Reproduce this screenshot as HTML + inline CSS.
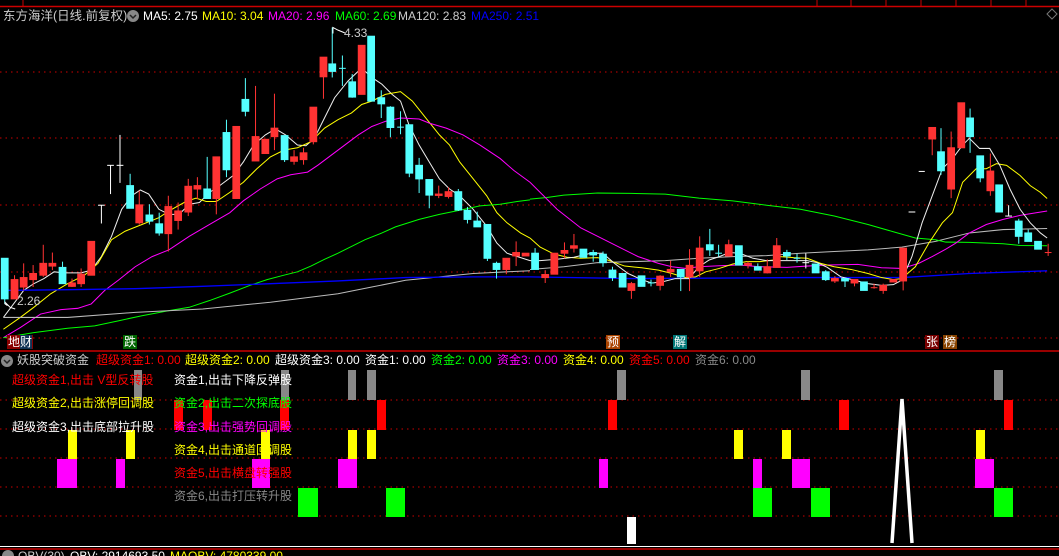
<!DOCTYPE html>
<html><head><meta charset="utf-8"><style>
html,body{margin:0;background:#000;width:1059px;height:556px;overflow:hidden}
body{position:relative;font-family:"Liberation Sans","Noto Sans CJK SC",sans-serif;font-size:12px}
.t{position:absolute;white-space:nowrap;line-height:14px}
.lb{position:absolute;top:335px;height:14px;line-height:14px;font-size:12px;color:#fff;padding:0 1px;white-space:nowrap}
</style></head><body>
<svg width="1059" height="556" style="position:absolute;left:0;top:0">
<line x1="0" y1="6.5" x2="1059" y2="6.5" stroke="#c00" stroke-width="1.5"/>
<line x1="23" y1="0" x2="23" y2="6" stroke="#c00"/>
<g stroke="#c00"><line x1="817" y1="0" x2="817" y2="6"/><line x1="851" y1="0" x2="851" y2="6"/><line x1="886" y1="0" x2="886" y2="6"/><line x1="921" y1="0" x2="921" y2="6"/><line x1="956" y1="0" x2="956" y2="6"/><line x1="991" y1="0" x2="991" y2="6"/><line x1="1026" y1="0" x2="1026" y2="6"/></g>
<g stroke="#c00" stroke-dasharray="1.5,4" stroke-width="1">
<line x1="0" y1="72" x2="1059" y2="72"/><line x1="0" y1="138" x2="1059" y2="138"/><line x1="0" y1="205" x2="1059" y2="205"/><line x1="0" y1="272" x2="1059" y2="272"/><line x1="0" y1="338" x2="1059" y2="338"/>
<line x1="0" y1="400" x2="1059" y2="400"/><line x1="0" y1="429" x2="1059" y2="429"/><line x1="0" y1="458" x2="1059" y2="458"/><line x1="0" y1="487" x2="1059" y2="487"/><line x1="0" y1="516" x2="1059" y2="516"/>
</g>
<line x1="0" y1="351" x2="1059" y2="351" stroke="#c00" stroke-width="1.5"/>
<g transform="translate(0,20) scale(0.338)">
<g fill="none" stroke-width="3">
<polyline stroke="#eee" points="10,880 40,840 70,800 100,780 130,765 160,745 190,748 240,748 270,740 300,700 330,640 360,560 390,520 415,503 440,515 470,560 500,575 530,575 560,545 590,540 620,510 650,490 690,460 720,420 750,370 785,340 815,322 845,340 880,370 905,372 930,350 960,290 990,230 1030,180 1070,142 1100,170 1130,190 1160,220 1185,240 1210,310 1240,370 1270,420 1300,470 1330,500 1360,520 1400,560 1440,610 1470,660 1500,690 1568,712"/>
<polyline stroke="#ff0" points="10,915 60,880 100,850 150,810 200,780 250,755 290,720 330,650 370,625 420,605 470,585 500,565 550,537 580,527 610,537 640,537 680,510 720,480 760,440 800,405 840,385 880,378 920,360 960,320 1000,295 1040,275 1070,250 1100,240 1140,220 1185,212 1220,240 1260,290 1300,340 1330,370 1360,420 1400,470 1440,520 1470,570 1500,600 1540,630 1568,645"/>
<polyline stroke="#f0f" points="10,940 60,910 120,870 180,857 230,853 270,840 310,800 350,770 400,730 450,700 500,680 560,640 620,605 680,570 720,535 770,500 820,470 860,458 910,450 940,430 980,400 1020,370 1060,340 1100,315 1140,300 1185,290 1240,293 1270,305 1320,320 1370,340 1420,370 1480,410 1520,445 1568,480"/>
<polyline stroke="#0f0" points="10,940 100,925 200,912 280,905 350,890 420,875 500,860 560,850 620,830 680,808 740,785 790,768 840,755 880,745 920,728 960,708 1000,690 1040,670 1080,650 1130,630 1170,612 1240,590 1300,575 1360,563 1420,550 1480,545 1530,537 1568,532"/>
<polyline stroke="#bbb" points="10,880 200,880 400,865 600,855 800,835 1000,810 1100,790 1200,770 1300,760 1400,750 1500,745 1568,742"/>
<polyline stroke="#00f" stroke-width="4" points="10,800 200,798 400,795 600,788 800,780 1000,772 1200,762 1400,760 1568,760"/>
</g>
<g stroke-width="3">
<g stroke="#f33" fill="#f33">
<line x1="43" y1="755" x2="43" y2="825"/><rect x="33" y="768" width="20" height="57"/>
<line x1="70" y1="720" x2="70" y2="800"/><rect x="60" y="762" width="20" height="28"/>
<line x1="98" y1="725" x2="98" y2="790"/><rect x="88" y="750" width="20" height="18"/>
<line x1="128" y1="665" x2="128" y2="760"/><rect x="118" y="720" width="20" height="35"/>
<line x1="155" y1="688" x2="155" y2="740"/><rect x="145" y="720" width="20" height="8"/>
<line x1="213" y1="765" x2="213" y2="790"/><rect x="203" y="778" width="20" height="10"/>
<line x1="240" y1="735" x2="240" y2="790"/><rect x="230" y="752" width="20" height="28"/>
<rect x="260" y="655" width="20" height="100"/>
<line x1="412" y1="505" x2="412" y2="605"/><rect x="402" y="547" width="20" height="53"/>
<line x1="498" y1="520" x2="498" y2="685"/><rect x="488" y="552" width="20" height="80"/>
<line x1="527" y1="540" x2="527" y2="620"/><rect x="517" y="565" width="20" height="28"/>
<line x1="557" y1="470" x2="557" y2="580"/><rect x="547" y="492" width="20" height="76"/>
<line x1="584" y1="465" x2="584" y2="530"/><rect x="574" y="490" width="20" height="10"/>
<line x1="640" y1="405" x2="640" y2="575"/><rect x="630" y="405" width="20" height="123"/>
<rect x="689" y="315" width="20" height="213"/>
<line x1="756" y1="195" x2="756" y2="417"/><rect x="746" y="345" width="20" height="72"/>
<rect x="775" y="353" width="20" height="42"/>
<line x1="812" y1="218" x2="812" y2="385"/><rect x="802" y="320" width="20" height="25"/>
<line x1="870" y1="385" x2="870" y2="428"/><rect x="860" y="405" width="20" height="13"/>
<line x1="898" y1="378" x2="898" y2="428"/><rect x="888" y="393" width="20" height="20"/>
<line x1="927" y1="258" x2="927" y2="368"/><rect x="917" y="258" width="20" height="102"/>
<line x1="957" y1="110" x2="957" y2="233"/><rect x="947" y="110" width="20" height="58"/>
<rect x="1060" y="75" width="20" height="145"/>
<line x1="1298" y1="490" x2="1298" y2="527"/><rect x="1288" y="515" width="20" height="4"/>
<line x1="1327" y1="495" x2="1327" y2="528"/><rect x="1317" y="508" width="20" height="14"/>
<line x1="1498" y1="705" x2="1498" y2="752"/><rect x="1488" y="705" width="20" height="33"/>
<line x1="1527" y1="655" x2="1527" y2="728"/><rect x="1517" y="688" width="20" height="10"/>
<rect x="1545" y="690" width="20" height="8"/>
</g>
<g stroke="#5ff" fill="#5ff">
<line x1="14" y1="705" x2="14" y2="840"/><rect x="4" y="705" width="20" height="120"/>
<line x1="185" y1="715" x2="185" y2="780"/><rect x="175" y="732" width="20" height="48"/>
<line x1="385" y1="455" x2="385" y2="557"/><rect x="375" y="490" width="20" height="67"/>
<line x1="442" y1="545" x2="442" y2="605"/><rect x="432" y="577" width="20" height="18"/>
<line x1="471" y1="570" x2="471" y2="638"/><rect x="461" y="603" width="20" height="27"/>
<line x1="613" y1="405" x2="613" y2="528"/><rect x="603" y="500" width="20" height="28"/>
<line x1="670" y1="295" x2="670" y2="465"/><rect x="660" y="333" width="20" height="110"/>
<line x1="726" y1="172" x2="726" y2="285"/><rect x="716" y="235" width="20" height="35"/>
<line x1="842" y1="342" x2="842" y2="420"/><rect x="832" y="342" width="20" height="71"/>
<line x1="983" y1="22" x2="983" y2="170"/><rect x="973" y="130" width="20" height="22"/>
<line x1="1013" y1="105" x2="1013" y2="195"/><line x1="1003" y1="143" x2="1023" y2="143"/>
<line x1="1042" y1="160" x2="1042" y2="230"/><rect x="1032" y="183" width="20" height="45"/>
<rect x="1088" y="48" width="20" height="192"/>
<line x1="1128" y1="208" x2="1128" y2="290"/><rect x="1118" y="230" width="20" height="18"/>
<line x1="1155" y1="255" x2="1155" y2="347"/><rect x="1145" y="258" width="20" height="60"/>
<line x1="1185" y1="270" x2="1185" y2="338"/><line x1="1175" y1="317" x2="1195" y2="317"/>
<line x1="1211" y1="310" x2="1211" y2="465"/><rect x="1201" y="310" width="20" height="143"/>
<line x1="1240" y1="408" x2="1240" y2="512"/><rect x="1230" y="430" width="20" height="40"/>
<line x1="1270" y1="472" x2="1270" y2="557"/><rect x="1260" y="472" width="20" height="46"/>
<line x1="1356" y1="500" x2="1356" y2="565"/><rect x="1346" y="508" width="20" height="54"/>
<line x1="1383" y1="553" x2="1383" y2="602"/><rect x="1373" y="563" width="20" height="27"/>
<line x1="1412" y1="567" x2="1412" y2="612"/><rect x="1402" y="595" width="20" height="17"/>
<line x1="1442" y1="605" x2="1442" y2="713"/><rect x="1432" y="605" width="20" height="100"/>
<line x1="1469" y1="715" x2="1469" y2="765"/><rect x="1459" y="720" width="20" height="18"/>
</g>
<g stroke="#fff"><line x1="300" y1="548" x2="300" y2="602"/><line x1="290" y1="548" x2="310" y2="548"/>
<line x1="327" y1="430" x2="327" y2="515"/><line x1="317" y1="430" x2="337" y2="430"/>
<line x1="355" y1="340" x2="355" y2="482"/><line x1="345" y1="430" x2="365" y2="430"/>
<polyline fill="none" points="985,40 985,22 1000,30 1020,38"/><polyline fill="none" points="22,845 15,840 15,835 30,850 45,855"/></g>
</g>
</g>
<g transform="translate(530,20) scale(0.338)">
<g fill="none" stroke-width="3">
<polyline stroke="#bbb" points="0,738 100,730 200,718 300,715 400,712 500,705 600,700 700,697 800,690 900,685 1000,680 1100,672 1200,655 1300,630 1400,620 1530,617"/>
<polyline stroke="#0f0" points="0,530 50,525 100,518 200,512 300,513 400,515 500,527 600,535 700,548 800,560 900,580 1000,605 1080,628 1140,645 1200,650 1230,657 1300,658 1400,662 1450,667 1530,668"/>
<polyline stroke="#f0f" points="0,480 50,530 80,560 150,615 220,650 270,675 320,700 380,720 420,730 460,735 500,730 560,727 620,725 680,730 760,732 820,728 880,725 970,723 1040,733 1100,735 1150,720 1190,700 1230,678 1260,660 1300,630 1350,605 1400,590 1450,578 1500,570 1530,565"/>
<polyline stroke="#00f" stroke-width="4" points="0,760 300,765 800,762 1100,762 1300,750 1530,742"/>
<polyline stroke="#ff0" points="0,645 30,672 70,692 110,702 150,705 200,703 230,710 280,728 330,733 380,740 420,750 460,762 490,760 520,745 560,735 600,722 640,715 680,715 720,710 740,700 780,703 820,705 860,720 900,730 950,738 1000,750 1040,762 1075,768 1100,765 1140,730 1180,660 1220,600 1250,570 1280,480 1320,440 1350,440 1380,425 1410,430 1450,460 1480,490 1510,510 1530,528"/>
<polyline stroke="#eee" points="0,712 30,712 80,708 130,702 180,690 215,690 250,720 290,750 330,768 360,778 390,775 430,765 470,765 500,730 530,710 560,700 590,688 620,690 660,705 700,712 740,712 780,712 820,712 850,718 880,732 920,760 960,770 1000,780 1040,785 1075,783 1100,770 1130,700 1160,600 1190,520 1220,440 1250,410 1280,370 1300,350 1330,380 1360,380 1390,430 1420,500 1450,560 1480,600 1510,630 1530,645"/>
</g>
<g stroke-width="3">
<g stroke="#f33" fill="#f33">
<line x1="45" y1="740" x2="45" y2="778"/><rect x="35" y="753" width="20" height="9"/>
<rect x="62" y="690" width="20" height="62"/>
<line x1="102" y1="658" x2="102" y2="705"/><rect x="92" y="682" width="20" height="8"/>
<line x1="130" y1="633" x2="130" y2="688"/><rect x="120" y="668" width="20" height="7"/>
<line x1="300" y1="775" x2="300" y2="825"/><rect x="290" y="780" width="20" height="20"/>
<line x1="385" y1="755" x2="385" y2="800"/><rect x="375" y="758" width="20" height="27"/>
<line x1="416" y1="712" x2="416" y2="760"/><rect x="406" y="738" width="20" height="7"/>
<line x1="472" y1="678" x2="472" y2="802"/><rect x="462" y="726" width="20" height="34"/>
<line x1="502" y1="640" x2="502" y2="760"/><rect x="492" y="675" width="20" height="67"/>
<line x1="588" y1="650" x2="588" y2="700"/><rect x="578" y="665" width="20" height="33"/>
<line x1="645" y1="715" x2="645" y2="735"/><rect x="635" y="720" width="20" height="5"/>
<line x1="702" y1="708" x2="702" y2="750"/><rect x="692" y="730" width="20" height="18"/>
<line x1="730" y1="645" x2="730" y2="732"/><rect x="720" y="668" width="20" height="64"/>
<line x1="902" y1="758" x2="902" y2="778"/><rect x="892" y="765" width="20" height="7"/>
<line x1="960" y1="768" x2="960" y2="788"/><rect x="950" y="768" width="20" height="10"/>
<line x1="1018" y1="780" x2="1018" y2="795"/><line x1="1008" y1="792" x2="1028" y2="792"/>
<line x1="1045" y1="780" x2="1045" y2="810"/><rect x="1035" y="785" width="20" height="15"/>
<rect x="1065" y="768" width="20" height="7"/>
<line x1="1104" y1="675" x2="1104" y2="800"/><rect x="1094" y="675" width="20" height="97"/>
<line x1="1190" y1="318" x2="1190" y2="400"/><rect x="1180" y="318" width="20" height="34"/>
<line x1="1246" y1="330" x2="1246" y2="527"/><rect x="1236" y="378" width="20" height="122"/>
<rect x="1266" y="245" width="20" height="133"/>
<line x1="1362" y1="395" x2="1362" y2="520"/><rect x="1352" y="447" width="20" height="58"/>
<line x1="1533" y1="662" x2="1533" y2="698"/><line x1="1523" y1="688" x2="1543" y2="688"/>
</g>
<g stroke="#5ff" fill="#5ff">
<line x1="15" y1="675" x2="15" y2="738"/><rect x="5" y="690" width="20" height="48"/>
<rect x="148" y="678" width="20" height="24"/>
<line x1="187" y1="680" x2="187" y2="715"/><rect x="177" y="688" width="20" height="7"/>
<line x1="216" y1="685" x2="216" y2="730"/><rect x="206" y="693" width="20" height="25"/>
<line x1="244" y1="730" x2="244" y2="772"/><rect x="234" y="740" width="20" height="22"/>
<rect x="264" y="750" width="20" height="40"/>
<rect x="320" y="757" width="20" height="31"/>
<line x1="358" y1="768" x2="358" y2="788"/><line x1="348" y1="778" x2="368" y2="778"/>
<line x1="446" y1="738" x2="446" y2="802"/><rect x="436" y="738" width="20" height="22"/>
<line x1="532" y1="618" x2="532" y2="698"/><rect x="522" y="665" width="20" height="15"/>
<line x1="558" y1="665" x2="558" y2="700"/><line x1="548" y1="690" x2="568" y2="690"/>
<rect x="608" y="668" width="20" height="57"/>
<line x1="674" y1="720" x2="674" y2="740"/><rect x="664" y="730" width="20" height="10"/>
<line x1="760" y1="680" x2="760" y2="710"/><rect x="750" y="688" width="20" height="10"/>
<line x1="790" y1="692" x2="790" y2="718"/><line x1="780" y1="705" x2="800" y2="705"/>
<rect x="835" y="722" width="20" height="26"/>
<line x1="875" y1="740" x2="875" y2="772"/><rect x="865" y="745" width="20" height="23"/>
<line x1="932" y1="765" x2="932" y2="790"/><rect x="922" y="765" width="20" height="7"/>
<rect x="978" y="775" width="20" height="25"/>
<line x1="1216" y1="320" x2="1216" y2="458"/><rect x="1206" y="390" width="20" height="56"/>
<line x1="1302" y1="262" x2="1302" y2="393"/><rect x="1292" y="290" width="20" height="55"/>
<line x1="1332" y1="402" x2="1332" y2="480"/><rect x="1322" y="402" width="20" height="65"/>
<rect x="1378" y="488" width="20" height="80"/>
<line x1="1446" y1="588" x2="1446" y2="662"/><rect x="1436" y="595" width="20" height="45"/>
<line x1="1474" y1="620" x2="1474" y2="655"/><rect x="1464" y="630" width="20" height="25"/>
<rect x="1493" y="655" width="20" height="23"/>
</g>
<g stroke="#fff">
<line x1="816" y1="690" x2="816" y2="735"/><line x1="806" y1="718" x2="826" y2="718"/>
<line x1="1120" y1="568" x2="1140" y2="568"/><line x1="1150" y1="448" x2="1168" y2="448"/>
<line x1="1416" y1="548" x2="1416" y2="580"/><line x1="1406" y1="580" x2="1426" y2="580"/>
</g>
</g>
</g>
<g>
<g fill="#888"><rect x="134" y="370" width="8" height="30"/><rect x="281" y="370" width="8" height="30"/><rect x="348" y="370" width="8" height="30"/><rect x="367" y="370" width="9" height="30"/><rect x="617" y="370" width="9" height="30"/><rect x="801" y="370" width="9" height="30"/><rect x="994" y="370" width="9" height="30"/></g>
<g fill="#f00"><rect x="174" y="400" width="9" height="30"/><rect x="203" y="400" width="9" height="30"/><rect x="280" y="400" width="9" height="30"/><rect x="377" y="400" width="9" height="30"/><rect x="608" y="400" width="9" height="30"/><rect x="839" y="400" width="10" height="30"/><rect x="1004" y="400" width="9" height="30"/></g>
<g fill="#ff0"><rect x="68" y="430" width="9" height="29"/><rect x="126" y="430" width="9" height="29"/><rect x="261" y="430" width="9" height="29"/><rect x="348" y="430" width="9" height="29"/><rect x="367" y="430" width="9" height="29"/><rect x="734" y="430" width="9" height="29"/><rect x="782" y="430" width="9" height="29"/><rect x="976" y="430" width="9" height="29"/></g>
<g fill="#f0f"><rect x="57" y="459" width="20" height="29"/><rect x="116" y="459" width="9" height="29"/><rect x="252" y="459" width="18" height="29"/><rect x="338" y="459" width="19" height="29"/><rect x="599" y="459" width="9" height="29"/><rect x="753" y="459" width="9" height="29"/><rect x="792" y="459" width="18" height="29"/><rect x="975" y="459" width="19" height="29"/></g>
<g fill="#0f0"><rect x="298" y="488" width="20" height="29"/><rect x="386" y="488" width="19" height="29"/><rect x="753" y="488" width="19" height="29"/><rect x="811" y="488" width="19" height="29"/><rect x="994" y="488" width="19" height="29"/></g>
<rect x="627" y="517" width="9" height="27" fill="#fff"/>
<polyline points="892,543 902,399 912,543" fill="none" stroke="#fff" stroke-width="3.5"/>
<line x1="0" y1="546.5" x2="1059" y2="546.5" stroke="#fff" stroke-width="1"/>
<line x1="0" y1="549" x2="1059" y2="549" stroke="#c00" stroke-width="1.5"/>
</g>
<circle cx="133" cy="16" r="6" fill="#888"/><path d="M130 15 l3 3 l3 -3" stroke="#222" stroke-width="1.5" fill="none"/>
<circle cx="7" cy="361" r="6" fill="#888"/><path d="M4 360 l3 3 l3 -3" stroke="#222" stroke-width="1.5" fill="none"/>
<circle cx="8" cy="556" r="6" fill="#888"/>
<path d="M1047 14 l5 -5 l5 5 l-5 5z" fill="none" stroke="#777"/>
</svg>
<div class="t" style="left:3px;top:9px;color:#ccc;font-size:12.5px">东方海洋(日线.前复权)</div>
<div class="t" style="left:143px;top:9px;color:#fff">MA5: 2.75</div>
<div class="t" style="left:202px;top:9px;color:#ff0">MA10: 3.04</div>
<div class="t" style="left:268px;top:9px;color:#f0f">MA20: 2.96</div>
<div class="t" style="left:335px;top:9px;color:#0f0">MA60: 2.69</div>
<div class="t" style="left:398px;top:9px;color:#ccc">MA120: 2.83</div>
<div class="t" style="left:471px;top:9px;color:#00f">MA250: 2.51</div>
<div class="t" style="left:344px;top:26px;color:#ccc">4.33</div>
<div class="t" style="left:17px;top:294px;color:#ccc">2.26</div>
<div class="lb" style="left:7px;background:#800">地<span style="background:#135">财</span></div>
<div class="lb" style="left:123px;background:#060">跌</div>
<div class="lb" style="left:606px;background:#a40">预</div>
<div class="lb" style="left:673px;background:#077">解</div>
<div class="lb" style="left:925px;background:#700">张</div>
<div class="lb" style="left:943px;background:#840">榜</div>
<div class="t" style="left:17px;top:353px;color:#ccc">妖股突破资金</div>
<div class="t" style="left:96px;top:353px;color:#f00">超级资金1: 0.00</div>
<div class="t" style="left:185px;top:353px;color:#ff0">超级资金2: 0.00</div>
<div class="t" style="left:275px;top:353px;color:#fff">超级资金3: 0.00</div>
<div class="t" style="left:365px;top:353px;color:#fff">资金1: 0.00</div>
<div class="t" style="left:431px;top:353px;color:#0f0">资金2: 0.00</div>
<div class="t" style="left:497px;top:353px;color:#f0f">资金3: 0.00</div>
<div class="t" style="left:563px;top:353px;color:#ff0">资金4: 0.00</div>
<div class="t" style="left:629px;top:353px;color:#f00">资金5: 0.00</div>
<div class="t" style="left:695px;top:353px;color:#888">资金6: 0.00</div>
<div class="t" style="left:12px;top:373px;color:#f00">超级资金1,出击 V型反转股</div>
<div class="t" style="left:12px;top:396px;color:#ff0">超级资金2,出击涨停回调股</div>
<div class="t" style="left:12px;top:420px;color:#fff">超级资金3,出击底部拉升股</div>
<div class="t" style="left:174px;top:373px;color:#fff">资金1,出击下降反弹股</div>
<div class="t" style="left:174px;top:396px;color:#0f0">资金2,出击二次探底股</div>
<div class="t" style="left:174px;top:420px;color:#f0f">资金3,出击强势回调股</div>
<div class="t" style="left:174px;top:443px;color:#ff0">资金4,出击通道回调股</div>
<div class="t" style="left:174px;top:466px;color:#f00">资金5,出击横盘转强股</div>
<div class="t" style="left:174px;top:489px;color:#888">资金6,出击打压转升股</div>
<div class="t" style="left:18px;top:549px;color:#ccc">OBV(30)</div>
<div class="t" style="left:70px;top:549px;color:#fff">OBV: 2914693.50</div>
<div class="t" style="left:170px;top:549px;color:#ff0">MAOBV: 4780339.00</div>
</body></html>
